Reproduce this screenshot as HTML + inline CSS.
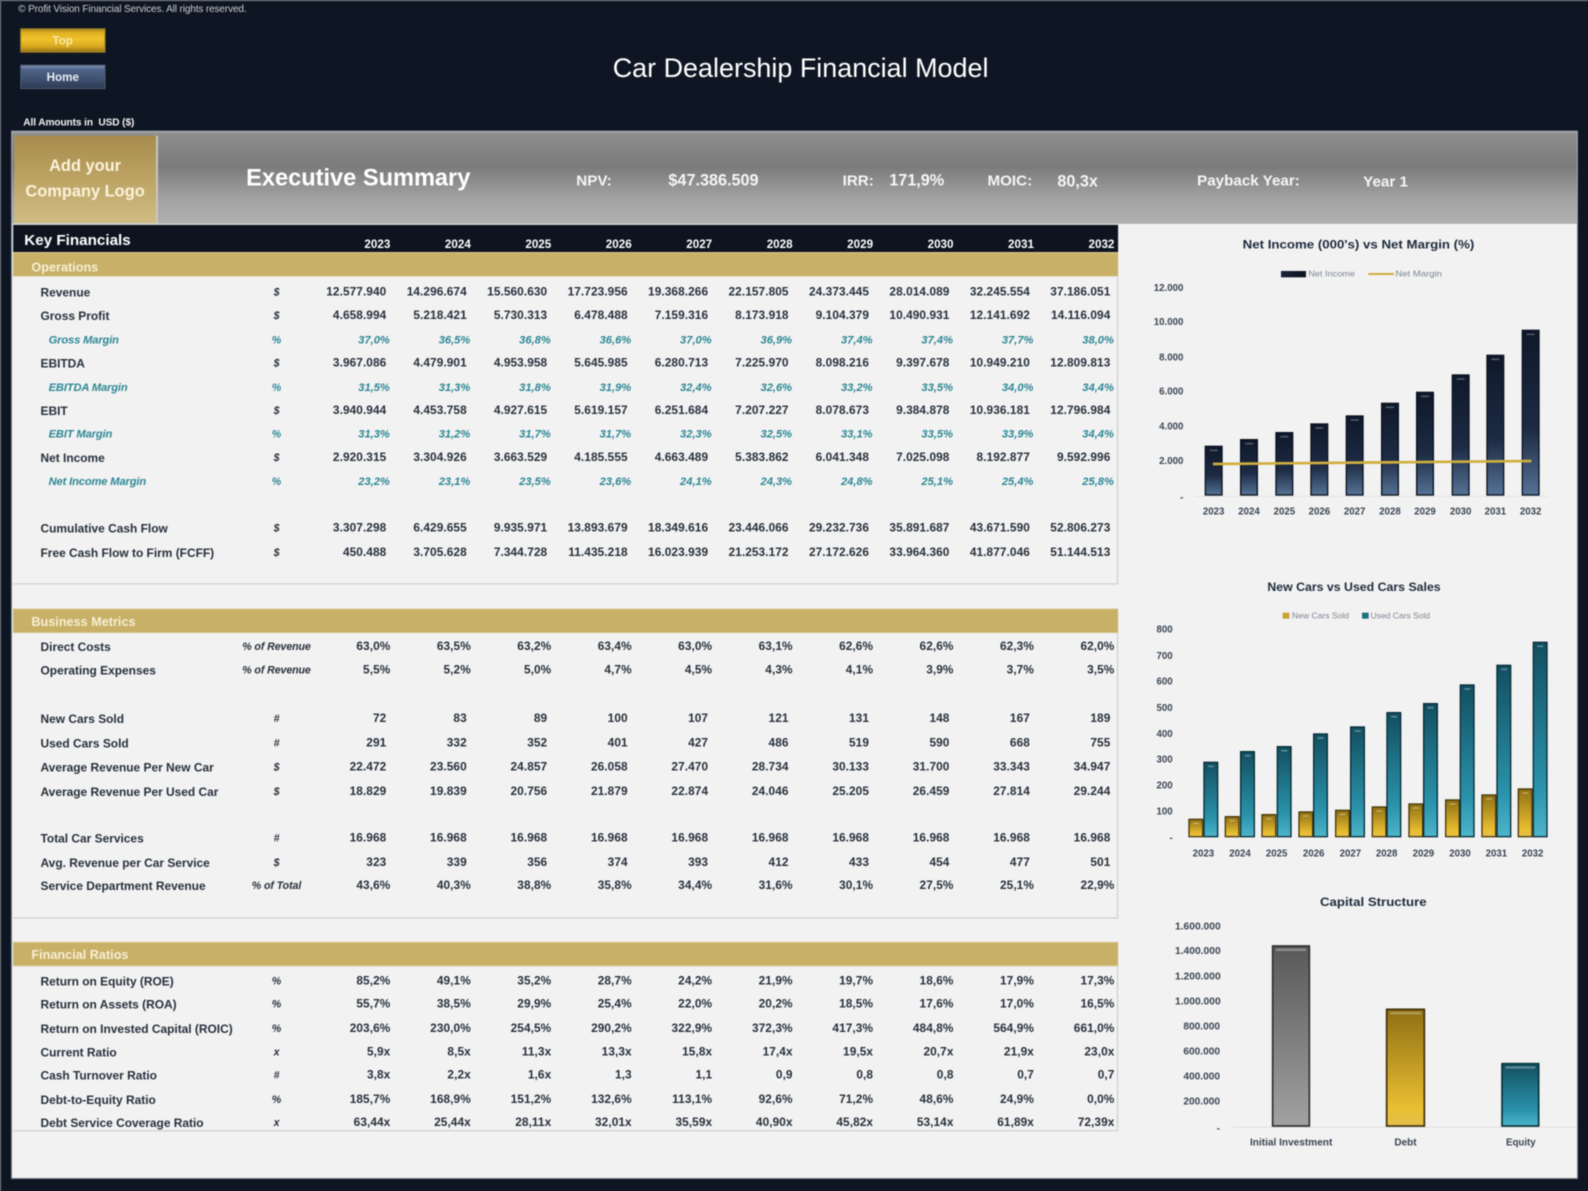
<!DOCTYPE html>
<html><head><meta charset="utf-8"><title>Car Dealership Financial Model</title>
<style>
html,body{margin:0;padding:0;width:1588px;height:1191px;overflow:hidden;background:#0d1420}
#w{position:absolute;left:0;top:0;width:1588px;height:1191px;overflow:hidden;filter:blur(.4px);
background-color:#0d1420;background-image:radial-gradient(circle at 1px 1px,#121a27 .8px,transparent 1px);background-size:3px 3px;
font-family:"Liberation Sans",sans-serif;box-shadow:inset 1px 1px 0 #8a8f96}
#p{position:absolute;left:0;top:0;width:1568px;height:1176px;transform:scale(1.01276);transform-origin:0 0}
#p>div{position:absolute}
.t{white-space:nowrap}
.panel{left:12px;top:130px;width:1545px;height:1033px;background:#f2f2f2;box-shadow:0 0 0 1px #9aa0a6}
.grey{left:12px;top:130px;width:1545px;height:91px;background:linear-gradient(#9a9a9a 0,#8c8c8c 4%,#7b7b7b 38%,#a2a2a2 72%,#b0b0b0 100%)}
.logo{left:14px;top:134px;width:142px;height:87px;background:linear-gradient(#a68b4c,#bda465 50%,#d0bd85);border-right:2px solid #c9c6bb;border-bottom:1px solid #cfc9b3;color:#fbf3da;font-weight:bold;font-size:16.2px;text-align:center;line-height:25px;padding-top:18px;box-sizing:border-box}
.btn{left:20px;width:84px;height:24px;text-align:center;font-weight:bold;font-size:11.5px;line-height:27px;box-sizing:border-box}
.dark{left:13px;top:222px;width:1091px;height:27px;background:#0d1420}
.gold{left:13px;width:1091px;height:24px;background:#c8b066;box-shadow:inset 0 1px 0 #d9c88f,inset 0 -1px 0 #d4c186;color:#f7efd6;font-weight:bold;font-size:12.5px;line-height:30px;padding-left:18px;box-sizing:border-box}
.yr{top:236px;left:302px;display:flex;color:#fff;font-weight:bold;font-size:11.5px;transform:translateX(4px)}
.yr span{width:79.44px;text-align:right}
.ln{background:#c9c9c9;height:1px;left:13px;width:1091px}
.vl{background:#c9c9c9;width:1px;left:1103px}
.v{font-size:16px;font-weight:bold;color:#f6f6f6}
.k{font-size:15px;font-weight:bold;color:#f6f6f6}
p{position:absolute;margin:.8px 0 0;left:0;width:1110px;height:16px;line-height:16px;padding-left:302px;box-sizing:border-box;display:flex;font-size:11.7px;font-weight:bold;color:#27303c;letter-spacing:.08px}
p b{position:absolute;left:40px;letter-spacing:-.01px;font-size:11.8px}
p i{position:absolute;left:223px;width:100px;text-align:center;font-weight:bold;font-size:10.5px;letter-spacing:-.1px}
p span{width:79.44px;text-align:right;flex:none}
p.q span{transform:translateX(4px)}
p.m{color:#2c8794;font-style:italic;font-size:11px;letter-spacing:0}
p.m b{left:48px;font-size:11px;letter-spacing:-.13px}
p.m span{transform:translateX(3.5px)}
svg{position:absolute;font-family:"Liberation Sans",sans-serif}
svg text{font-weight:bold;fill:#3a4554}
</style></head><body>
<div id="w">
<div id="p">
<div class="panel"></div>
<div class="grey"></div>
<div class="logo">Add your<br>Company Logo</div>
<div class="t" style="left:18px;top:4px;font-size:9.9px;color:#c9ccd0;letter-spacing:-.12px">© Profit Vision Financial Services. All rights reserved.</div>
<div class="btn" style="top:28px;background:linear-gradient(#9c7b18,#e0b222 18%,#f0c22c 45%,#d8a81e 75%,#8a6c14);box-shadow:inset 0 0 0 1px #a5862a;color:#f7e8a8">Top</div>
<div class="btn" style="top:64px;background:linear-gradient(#8b9cc0,#4e6288 20%,#3f5170 60%,#2a3850);box-shadow:inset 0 0 0 1px #525f78;color:#e8edf5">Home</div>
<div class="t" style="left:605px;top:50px;font-size:26.6px;color:#fff;line-height:34px">Car Dealership Financial Model</div>
<div class="t" style="left:23px;top:116px;font-size:10px;font-weight:bold;color:#f2f2f2;letter-spacing:-.1px">All Amounts in&nbsp; USD ($)</div>
<div class="t" style="left:243px;top:160px;font-size:23.3px;font-weight:bold;color:#fff;line-height:30px">Executive Summary</div>
<div class="t k" style="left:569px;top:170px">NPV:</div>
<div class="t v" style="left:660px;top:169.5px">$47.386.509</div>
<div class="t k" style="left:832px;top:170px">IRR:</div>
<div class="t v" style="left:878px;top:169.5px">171,9%</div>
<div class="t k" style="left:975px;top:170px">MOIC:</div>
<div class="t v" style="left:1044px;top:170.5px">80,3x</div>
<div class="t k" style="left:1182px;top:170px">Payback Year:</div>
<div class="t k" style="left:1346px;top:171px">Year 1</div>

<div class="dark"></div>
<div class="t" style="left:24px;top:229px;font-size:15px;font-weight:bold;color:#fff">Key Financials</div>
<div class="yr"><span>2023</span><span>2024</span><span>2025</span><span>2026</span><span>2027</span><span>2028</span><span>2029</span><span>2030</span><span>2031</span><span>2032</span></div>

<div class="gold" style="top:249px;line-height:31px">Operations</div>
<div class="vl" style="top:273px;height:303px"></div><div class="ln" style="top:576px"></div>
<div class="gold" style="top:601px;line-height:27px">Business Metrics</div>
<div class="vl" style="top:624px;height:282px"></div><div class="ln" style="top:906px"></div>
<div class="gold" style="top:930px;line-height:27px">Financial Ratios</div>
<div class="vl" style="top:953px;height:163px"></div><div class="ln" style="top:1116px"></div>

<p style="top:280px"><b>Revenue</b><i>$</i><span>12.577.940</span><span>14.296.674</span><span>15.560.630</span><span>17.723.956</span><span>19.368.266</span><span>22.157.805</span><span>24.373.445</span><span>28.014.089</span><span>32.245.554</span><span>37.186.051</span></p>
<p style="top:303px"><b>Gross Profit</b><i>$</i><span>4.658.994</span><span>5.218.421</span><span>5.730.313</span><span>6.478.488</span><span>7.159.316</span><span>8.173.918</span><span>9.104.379</span><span>10.490.931</span><span>12.141.692</span><span>14.116.094</span></p>
<p class="m" style="top:327px"><b>Gross Margin</b><i>%</i><span>37,0%</span><span>36,5%</span><span>36,8%</span><span>36,6%</span><span>37,0%</span><span>36,9%</span><span>37,4%</span><span>37,4%</span><span>37,7%</span><span>38,0%</span></p>
<p style="top:350px"><b>EBITDA</b><i>$</i><span>3.967.086</span><span>4.479.901</span><span>4.953.958</span><span>5.645.985</span><span>6.280.713</span><span>7.225.970</span><span>8.098.216</span><span>9.397.678</span><span>10.949.210</span><span>12.809.813</span></p>
<p class="m" style="top:374px"><b>EBITDA Margin</b><i>%</i><span>31,5%</span><span>31,3%</span><span>31,8%</span><span>31,9%</span><span>32,4%</span><span>32,6%</span><span>33,2%</span><span>33,5%</span><span>34,0%</span><span>34,4%</span></p>
<p style="top:397px"><b>EBIT</b><i>$</i><span>3.940.944</span><span>4.453.758</span><span>4.927.615</span><span>5.619.157</span><span>6.251.684</span><span>7.207.227</span><span>8.078.673</span><span>9.384.878</span><span>10.936.181</span><span>12.796.984</span></p>
<p class="m" style="top:420px"><b>EBIT Margin</b><i>%</i><span>31,3%</span><span>31,2%</span><span>31,7%</span><span>31,7%</span><span>32,3%</span><span>32,5%</span><span>33,1%</span><span>33,5%</span><span>33,9%</span><span>34,4%</span></p>
<p style="top:443px"><b>Net Income</b><i>$</i><span>2.920.315</span><span>3.304.926</span><span>3.663.529</span><span>4.185.555</span><span>4.663.489</span><span>5.383.862</span><span>6.041.348</span><span>7.025.098</span><span>8.192.877</span><span>9.592.996</span></p>
<p class="m" style="top:467px"><b>Net Income Margin</b><i>%</i><span>23,2%</span><span>23,1%</span><span>23,5%</span><span>23,6%</span><span>24,1%</span><span>24,3%</span><span>24,8%</span><span>25,1%</span><span>25,4%</span><span>25,8%</span></p>
<p style="top:513px"><b>Cumulative Cash Flow</b><i>$</i><span>3.307.298</span><span>6.429.655</span><span>9.935.971</span><span>13.893.679</span><span>18.349.616</span><span>23.446.066</span><span>29.232.736</span><span>35.891.687</span><span>43.671.590</span><span>52.806.273</span></p>
<p style="top:537px"><b>Free Cash Flow to Firm (FCFF)</b><i>$</i><span>450.488</span><span>3.705.628</span><span>7.344.728</span><span>11.435.218</span><span>16.023.939</span><span>21.253.172</span><span>27.172.626</span><span>33.964.360</span><span>41.877.046</span><span>51.144.513</span></p>

<p class="q" style="top:630px"><b>Direct Costs</b><i>% of Revenue</i><span>63,0%</span><span>63,5%</span><span>63,2%</span><span>63,4%</span><span>63,0%</span><span>63,1%</span><span>62,6%</span><span>62,6%</span><span>62,3%</span><span>62,0%</span></p>
<p class="q" style="top:653px"><b>Operating Expenses</b><i>% of Revenue</i><span>5,5%</span><span>5,2%</span><span>5,0%</span><span>4,7%</span><span>4,5%</span><span>4,3%</span><span>4,1%</span><span>3,9%</span><span>3,7%</span><span>3,5%</span></p>
<p style="top:701px"><b>New Cars Sold</b><i>#</i><span>72</span><span>83</span><span>89</span><span>100</span><span>107</span><span>121</span><span>131</span><span>148</span><span>167</span><span>189</span></p>
<p style="top:725px"><b>Used Cars Sold</b><i>#</i><span>291</span><span>332</span><span>352</span><span>401</span><span>427</span><span>486</span><span>519</span><span>590</span><span>668</span><span>755</span></p>
<p style="top:749px"><b>Average Revenue Per New Car</b><i>$</i><span>22.472</span><span>23.560</span><span>24.857</span><span>26.058</span><span>27.470</span><span>28.734</span><span>30.133</span><span>31.700</span><span>33.343</span><span>34.947</span></p>
<p style="top:773px"><b>Average Revenue Per Used Car</b><i>$</i><span>18.829</span><span>19.839</span><span>20.756</span><span>21.879</span><span>22.874</span><span>24.046</span><span>25.205</span><span>26.459</span><span>27.814</span><span>29.244</span></p>
<p style="top:819px"><b>Total Car Services</b><i>#</i><span>16.968</span><span>16.968</span><span>16.968</span><span>16.968</span><span>16.968</span><span>16.968</span><span>16.968</span><span>16.968</span><span>16.968</span><span>16.968</span></p>
<p style="top:843px"><b>Avg. Revenue per Car Service</b><i>$</i><span>323</span><span>339</span><span>356</span><span>374</span><span>393</span><span>412</span><span>433</span><span>454</span><span>477</span><span>501</span></p>
<p class="q" style="top:866px"><b>Service Department Revenue</b><i>% of Total</i><span>43,6%</span><span>40,3%</span><span>38,8%</span><span>35,8%</span><span>34,4%</span><span>31,6%</span><span>30,1%</span><span>27,5%</span><span>25,1%</span><span>22,9%</span></p>

<p class="q" style="top:960px"><b>Return on Equity (ROE)</b><i>%</i><span>85,2%</span><span>49,1%</span><span>35,2%</span><span>28,7%</span><span>24,2%</span><span>21,9%</span><span>19,7%</span><span>18,6%</span><span>17,9%</span><span>17,3%</span></p>
<p class="q" style="top:983px"><b>Return on Assets (ROA)</b><i>%</i><span>55,7%</span><span>38,5%</span><span>29,9%</span><span>25,4%</span><span>22,0%</span><span>20,2%</span><span>18,5%</span><span>17,6%</span><span>17,0%</span><span>16,5%</span></p>
<p class="q" style="top:1007px"><b>Return on Invested Capital (ROIC)</b><i>%</i><span>203,6%</span><span>230,0%</span><span>254,5%</span><span>290,2%</span><span>322,9%</span><span>372,3%</span><span>417,3%</span><span>484,8%</span><span>564,9%</span><span>661,0%</span></p>
<p class="q" style="top:1030px"><b>Current Ratio</b><i>x</i><span>5,9x</span><span>8,5x</span><span>11,3x</span><span>13,3x</span><span>15,8x</span><span>17,4x</span><span>19,5x</span><span>20,7x</span><span>21,9x</span><span>23,0x</span></p>
<p class="q" style="top:1053px"><b>Cash Turnover Ratio</b><i>#</i><span>3,8x</span><span>2,2x</span><span>1,6x</span><span>1,3</span><span>1,1</span><span>0,9</span><span>0,8</span><span>0,8</span><span>0,7</span><span>0,7</span></p>
<p class="q" style="top:1077px"><b>Debt-to-Equity Ratio</b><i>%</i><span>185,7%</span><span>168,9%</span><span>151,2%</span><span>132,6%</span><span>113,1%</span><span>92,6%</span><span>71,2%</span><span>48,6%</span><span>24,9%</span><span>0,0%</span></p>
<p class="q" style="top:1100px"><b>Debt Service Coverage Ratio</b><i>x</i><span>63,44x</span><span>25,44x</span><span>28,11x</span><span>32,01x</span><span>35,59x</span><span>40,90x</span><span>45,82x</span><span>53,14x</span><span>61,89x</span><span>72,39x</span></p>
</div>

<svg width="0" height="0" style="left:0;top:0"><defs>
<linearGradient id="gn" x1="0" y1="0" x2="0" y2="1"><stop offset="0" stop-color="#10182a"/><stop offset=".6" stop-color="#1d2b44"/><stop offset="1" stop-color="#557295"/></linearGradient>
<linearGradient id="gg" x1="0" y1="0" x2="0" y2="1"><stop offset="0" stop-color="#8f6f14"/><stop offset=".85" stop-color="#eabf32"/><stop offset="1" stop-color="#e4c04c"/></linearGradient>
<linearGradient id="gt" x1="0" y1="0" x2="0" y2="1"><stop offset="0" stop-color="#134f60"/><stop offset=".75" stop-color="#2a93ab"/><stop offset="1" stop-color="#4fb5cb"/></linearGradient>
<linearGradient id="ga" x1="0" y1="0" x2="0" y2="1"><stop offset="0" stop-color="#595959"/><stop offset="1" stop-color="#a2a2a2"/></linearGradient>
<linearGradient id="gs" x1="0" y1="0" x2="1" y2="0"><stop offset="0" stop-color="#1a2538"/><stop offset="1" stop-color="#0c1320"/></linearGradient>
</defs></svg>

<!-- Chart 1 -->
<svg style="left:1120px;top:225px" width="468" height="320" viewBox="0 0 1404 960">
<text x="368" y="70" font-size="35" textLength="695" lengthAdjust="spacingAndGlyphs" style="fill:#1d2a3c">Net Income (000's) vs Net Margin (%)</text>
<rect x="483" y="138" width="75" height="19" fill="url(#gs)"/>
<text x="565" y="154" font-size="25" textLength="140" lengthAdjust="spacingAndGlyphs" style="fill:#7c8693;font-weight:normal">Net Income</text>
<rect x="745" y="144" width="77" height="6" fill="#d1ac3e"/>
<text x="826" y="154" font-size="25" textLength="140" lengthAdjust="spacingAndGlyphs" style="fill:#7c8693;font-weight:normal">Net Margin</text>
<g font-size="29" text-anchor="end">
<text x="190" y="198">12.000</text><text x="190" y="300">10.000</text><text x="190" y="407">8.000</text><text x="190" y="509">6.000</text><text x="190" y="613">4.000</text><text x="190" y="717">2.000</text><text x="190" y="826">-</text></g>
<rect x="225" y="813" width="1060" height="2" fill="#dcdcdc"/>
<g fill="url(#gn)" stroke="#0a1220" stroke-width="4">
<rect x="256" y="664" width="50" height="146"/><rect x="362" y="644" width="50" height="166"/><rect x="468" y="623" width="50" height="187"/><rect x="573" y="597" width="50" height="213"/><rect x="679" y="573" width="50" height="237"/><rect x="785" y="535" width="50" height="275"/><rect x="890" y="502" width="50" height="308"/><rect x="997" y="450" width="50" height="360"/><rect x="1101" y="391" width="50" height="419"/><rect x="1207" y="316" width="50" height="494"/></g>
<g fill="#9fb0c4" opacity=".5">
<rect x="269" y="674" width="24" height="4"/><rect x="375" y="654" width="24" height="4"/><rect x="481" y="633" width="24" height="4"/><rect x="586" y="607" width="24" height="4"/><rect x="692" y="583" width="24" height="4"/><rect x="798" y="545" width="24" height="4"/><rect x="903" y="512" width="24" height="4"/><rect x="1010" y="460" width="24" height="4"/><rect x="1114" y="401" width="24" height="4"/><rect x="1220" y="326" width="24" height="4"/></g>
<line x1="279" y1="717" x2="1234" y2="708" stroke="#d0ae3e" stroke-width="8"/>
<g font-size="29" text-anchor="middle">
<text x="281" y="869">2023</text><text x="387" y="869">2024</text><text x="493" y="869">2025</text><text x="598" y="869">2026</text><text x="704" y="869">2027</text><text x="810" y="869">2028</text><text x="915" y="869">2029</text><text x="1022" y="869">2030</text><text x="1126" y="869">2031</text><text x="1232" y="869">2032</text></g>
</svg>

<!-- Chart 2 -->
<svg style="left:1120px;top:570px" width="468" height="320" viewBox="0 0 1404 960">
<text x="442" y="63" font-size="35" textLength="520" lengthAdjust="spacingAndGlyphs" style="fill:#1d2a3c">New Cars vs Used Cars Sales</text>
<rect x="488" y="128" width="20" height="18" fill="#c9a22c"/>
<text x="516" y="146" font-size="25" textLength="171" lengthAdjust="spacingAndGlyphs" style="fill:#7c8693;font-weight:normal">New Cars Sold</text>
<rect x="726" y="128" width="20" height="18" fill="#1f6f82"/>
<text x="752" y="146" font-size="25" textLength="178" lengthAdjust="spacingAndGlyphs" style="fill:#7c8693;font-weight:normal">Used Cars Sold</text>
<g font-size="29" text-anchor="end">
<text x="158" y="187">800</text><text x="158" y="267">700</text><text x="158" y="344">600</text><text x="158" y="423">500</text><text x="158" y="501">400</text><text x="158" y="578">300</text><text x="158" y="656">200</text><text x="158" y="734">100</text><text x="158" y="813">-</text></g>
<g fill="url(#gg)" stroke="#463708" stroke-width="4">
<rect x="207" y="748" width="41" height="52"/><rect x="316" y="740" width="41" height="60"/><rect x="426" y="734" width="41" height="66"/><rect x="537" y="726" width="41" height="74"/><rect x="647" y="721" width="41" height="79"/><rect x="757" y="711" width="41" height="89"/><rect x="867" y="702" width="41" height="98"/><rect x="977" y="690" width="41" height="110"/><rect x="1086" y="675" width="41" height="125"/><rect x="1195" y="657" width="41" height="143"/></g>
<g fill="url(#gt)" stroke="#062c36" stroke-width="4">
<rect x="252" y="577" width="41" height="223"/><rect x="362" y="545" width="41" height="255"/><rect x="472" y="530" width="41" height="270"/><rect x="581" y="492" width="41" height="308"/><rect x="692" y="471" width="41" height="329"/><rect x="801" y="428" width="41" height="372"/><rect x="911" y="401" width="41" height="399"/><rect x="1021" y="345" width="41" height="455"/><rect x="1131" y="286" width="41" height="514"/><rect x="1240" y="217" width="41" height="583"/></g>
<g fill="#fff" opacity=".38">
<rect x="219" y="758" width="18" height="4"/><rect x="328" y="750" width="18" height="4"/><rect x="438" y="744" width="18" height="4"/><rect x="549" y="736" width="18" height="4"/><rect x="659" y="731" width="18" height="4"/><rect x="769" y="721" width="18" height="4"/><rect x="879" y="712" width="18" height="4"/><rect x="989" y="700" width="18" height="4"/><rect x="1098" y="685" width="18" height="4"/><rect x="1207" y="667" width="18" height="4"/>
<rect x="264" y="587" width="18" height="4"/><rect x="374" y="555" width="18" height="4"/><rect x="484" y="540" width="18" height="4"/><rect x="593" y="502" width="18" height="4"/><rect x="704" y="481" width="18" height="4"/><rect x="813" y="438" width="18" height="4"/><rect x="923" y="411" width="18" height="4"/><rect x="1033" y="355" width="18" height="4"/><rect x="1143" y="296" width="18" height="4"/><rect x="1252" y="227" width="18" height="4"/></g>
<g font-size="29" text-anchor="middle">
<text x="250" y="859">2023</text><text x="360" y="859">2024</text><text x="470" y="859">2025</text><text x="581" y="859">2026</text><text x="691" y="859">2027</text><text x="800" y="859">2028</text><text x="910" y="859">2029</text><text x="1020" y="859">2030</text><text x="1129" y="859">2031</text><text x="1238" y="859">2032</text></g>
</svg>

<!-- Chart 3 -->
<svg style="left:1120px;top:880px" width="468" height="311" viewBox="0 0 1404 933">
<text x="600" y="78" font-size="35" textLength="320" lengthAdjust="spacingAndGlyphs" style="fill:#1d2a3c">Capital Structure</text>
<g font-size="29" text-anchor="end">
<text x="302" y="148" textLength="137" lengthAdjust="spacingAndGlyphs">1.600.000</text><text x="302" y="222" textLength="137" lengthAdjust="spacingAndGlyphs">1.400.000</text><text x="302" y="298" textLength="137" lengthAdjust="spacingAndGlyphs">1.200.000</text><text x="302" y="373" textLength="137" lengthAdjust="spacingAndGlyphs">1.000.000</text><text x="300" y="449" textLength="110" lengthAdjust="spacingAndGlyphs">800.000</text><text x="300" y="523" textLength="110" lengthAdjust="spacingAndGlyphs">600.000</text><text x="300" y="599" textLength="110" lengthAdjust="spacingAndGlyphs">400.000</text><text x="300" y="674" textLength="110" lengthAdjust="spacingAndGlyphs">200.000</text><text x="300" y="755">-</text></g>
<rect x="340" y="741" width="1030" height="2" fill="#d6d6d6"/>
<rect x="458" y="198" width="110" height="540" fill="url(#ga)" stroke="#2f2f2f" stroke-width="5"/>
<rect x="800" y="388" width="113" height="350" fill="url(#gg)" stroke="#3d3008" stroke-width="5"/>
<rect x="1146" y="551" width="110" height="187" fill="url(#gt)" stroke="#063440" stroke-width="5"/>
<g fill="#fff" opacity=".3"><rect x="468" y="206" width="90" height="7"/><rect x="810" y="396" width="93" height="7"/><rect x="1156" y="559" width="90" height="7"/></g>
<text x="390" y="796" font-size="29" textLength="247" lengthAdjust="spacingAndGlyphs">Initial Investment</text>
<text x="823" y="796" font-size="29" textLength="67" lengthAdjust="spacingAndGlyphs">Debt</text>
<text x="1158" y="796" font-size="29" textLength="89" lengthAdjust="spacingAndGlyphs">Equity</text>
</svg>
</div>
</body></html>
